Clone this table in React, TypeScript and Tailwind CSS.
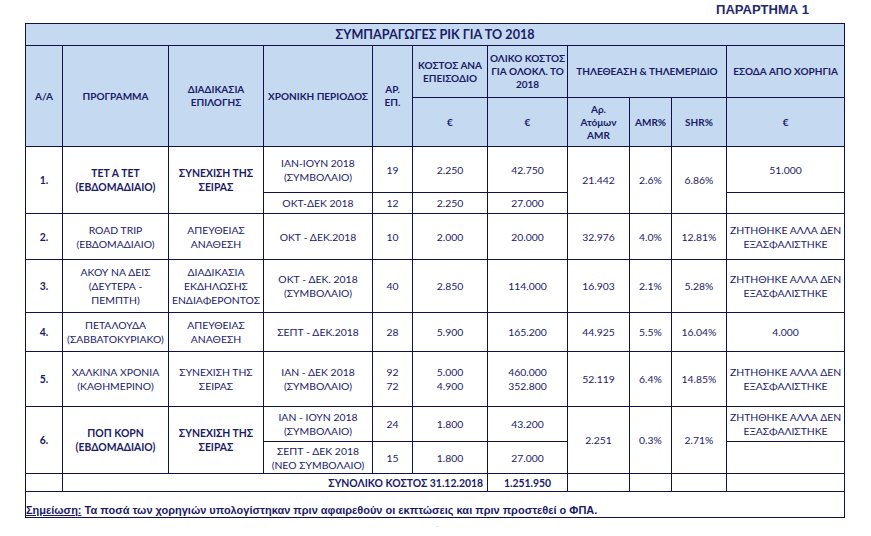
const cell = "border border-[#10104a] text-center align-middle px-0.5 whitespace-nowrap";
const head = `${cell} bg-[#c5d9f1] font-bold text-[10px] leading-[13px]`;
const body = `${cell} text-[10.4px] leading-[14px]`;

type Row = {
  no: string;
  title: string[];
  method: string[];
  bold?: boolean;
};

function Lines({ items }: { items: string[] }) {
  return (
    <>
      {items.map((t, i) => (
        <div key={i}>{t}</div>
      ))}
    </>
  );
}

export default function App() {
  const gap = "ΖΗΤΗΘΗΚΕ ΑΛΛΑ ΔΕΝ ΕΞΑΣΦΑΛΙΣΤΗΚΕ".split(" ΕΞ");
  const notSecured = [gap[0], "ΕΞ" + gap[1]];

  const r2: Row = { no: "2.", title: ["ROAD TRIP", "(ΕΒΔΟΜΑΔΙΑΙΟ)"], method: ["ΑΠΕΥΘΕΙΑΣ", "ΑΝΑΘΕΣΗ"] };

  return (
    <div className="w-[871px] h-[536px] bg-white text-[#1a1a66] font-['Lato','Noto_Sans',sans-serif] relative">
      <div className="h-[23px] flex justify-end pr-[62px] pt-[2px]">
        <span className="font-['Liberation_Sans',sans-serif] font-bold text-[13px] leading-[16px] text-[#1f2a6a]">
          ΠΑΡΑΡΤΗΜΑ 1
        </span>
      </div>
      <table className="ml-[25px] w-[819px] table-fixed border-collapse">
        <colgroup>
          <col className="w-[37px]" />
          <col className="w-[106px]" />
          <col className="w-[95px]" />
          <col className="w-[109px]" />
          <col className="w-[40px]" />
          <col className="w-[75px]" />
          <col className="w-[80px]" />
          <col className="w-[62px]" />
          <col className="w-[42px]" />
          <col className="w-[55px]" />
          <col className="w-[118px]" />
        </colgroup>
        <tbody>
          <tr className="h-[22px]">
            <td colSpan={11} className={`${head} text-[12.6px] leading-[16px]`}>
              ΣΥΜΠΑΡΑΓΩΓΕΣ ΡΙΚ ΓΙΑ ΤΟ 2018
            </td>
          </tr>
          <tr className="h-[52px]">
            <td rowSpan={2} className={head}>Α/Α</td>
            <td rowSpan={2} className={head}>ΠΡΟΓΡΑΜΜΑ</td>
            <td rowSpan={2} className={head}>
              <Lines items={["ΔΙΑΔΙΚΑΣΙΑ", "ΕΠΙΛΟΓΗΣ"]} />
            </td>
            <td rowSpan={2} className={head}>ΧΡΟΝΙΚΗ ΠΕΡΙΟΔΟΣ</td>
            <td rowSpan={2} className={head}>
              <Lines items={["ΑΡ.", "ΕΠ."]} />
            </td>
            <td className={head}>
              <Lines items={["ΚΟΣΤΟΣ ΑΝΑ", "ΕΠΕΙΣΟΔΙΟ"]} />
            </td>
            <td className={head}>
              <Lines items={["ΟΛΙΚΟ ΚΟΣΤΟΣ", "ΓΙΑ ΟΛΟΚΛ. ΤΟ", "2018"]} />
            </td>
            <td colSpan={3} className={head}>ΤΗΛΕΘΕΑΣΗ & ΤΗΛΕΜΕΡΙΔΙΟ</td>
            <td className={head}>ΕΣΟΔΑ ΑΠΟ ΧΟΡΗΓΙΑ</td>
          </tr>
          <tr className="h-[49px]">
            <td className={head}>€</td>
            <td className={head}>€</td>
            <td className={head}>
              <Lines items={["Αρ.", "Ατόμων", "AMR"]} />
            </td>
            <td className={head}>AMR%</td>
            <td className={head}>SHR%</td>
            <td className={head}>€</td>
          </tr>

          {/* 1 */}
          <tr className="h-[46px]">
            <td rowSpan={2} className={`${body} font-bold`}>1.</td>
            <td rowSpan={2} className={`${body} font-bold`}>
              <Lines items={["ΤΕΤ Α ΤΕΤ", "(ΕΒΔΟΜΑΔΙΑΙΟ)"]} />
            </td>
            <td rowSpan={2} className={`${body} font-bold`}>
              <Lines items={["ΣΥΝΕΧΙΣΗ ΤΗΣ", "ΣΕΙΡΑΣ"]} />
            </td>
            <td className={body}>
              <Lines items={["ΙΑΝ-ΙΟΥΝ 2018", "(ΣΥΜΒΟΛΑΙΟ)"]} />
            </td>
            <td className={body}>19</td>
            <td className={body}>2.250</td>
            <td className={body}>42.750</td>
            <td rowSpan={2} className={body}>21.442</td>
            <td rowSpan={2} className={body}>2.6%</td>
            <td rowSpan={2} className={body}>6.86%</td>
            <td className={body}>51.000</td>
          </tr>
          <tr className="h-[21px]">
            <td className={body}>ΟΚΤ-ΔΕΚ 2018</td>
            <td className={body}>12</td>
            <td className={body}>2.250</td>
            <td className={body}>27.000</td>
            <td className={body}></td>
          </tr>

          {/* 2 */}
          <tr className="h-[46px]">
            <td className={`${body} font-bold`}>{r2.no}</td>
            <td className={body}><Lines items={r2.title} /></td>
            <td className={body}><Lines items={r2.method} /></td>
            <td className={body}>ΟΚΤ - ΔΕΚ.2018</td>
            <td className={body}>10</td>
            <td className={body}>2.000</td>
            <td className={body}>20.000</td>
            <td className={body}>32.976</td>
            <td className={body}>4.0%</td>
            <td className={body}>12.81%</td>
            <td className={body}><Lines items={notSecured} /></td>
          </tr>

          {/* 3 */}
          <tr className="h-[53px]">
            <td className={`${body} font-bold`}>3.</td>
            <td className={body}>
              <Lines items={["ΑΚΟΥ ΝΑ ΔΕΙΣ", "(ΔΕΥΤΕΡΑ -", "ΠΕΜΠΤΗ)"]} />
            </td>
            <td className={body}>
              <Lines items={["ΔΙΑΔΙΚΑΣΙΑ", "ΕΚΔΗΛΩΣΗΣ", "ΕΝΔΙΑΦΕΡΟΝΤΟΣ"]} />
            </td>
            <td className={body}>
              <Lines items={["ΟΚΤ - ΔΕΚ. 2018", "(ΣΥΜΒΟΛΑΙΟ)"]} />
            </td>
            <td className={body}>40</td>
            <td className={body}>2.850</td>
            <td className={body}>114.000</td>
            <td className={body}>16.903</td>
            <td className={body}>2.1%</td>
            <td className={body}>5.28%</td>
            <td className={body}><Lines items={notSecured} /></td>
          </tr>

          {/* 4 */}
          <tr className="h-[39px]">
            <td className={`${body} font-bold`}>4.</td>
            <td className={body}>
              <Lines items={["ΠΕΤΑΛΟΥΔΑ", "(ΣΑΒΒΑΤΟΚΥΡΙΑΚΟ)"]} />
            </td>
            <td className={body}>
              <Lines items={["ΑΠΕΥΘΕΙΑΣ", "ΑΝΑΘΕΣΗ"]} />
            </td>
            <td className={body}>ΣΕΠΤ - ΔΕΚ.2018</td>
            <td className={body}>28</td>
            <td className={body}>5.900</td>
            <td className={body}>165.200</td>
            <td className={body}>44.925</td>
            <td className={body}>5.5%</td>
            <td className={body}>16.04%</td>
            <td className={body}>4.000</td>
          </tr>

          {/* 5 */}
          <tr className="h-[55px]">
            <td className={`${body} font-bold`}>5.</td>
            <td className={body}>
              <Lines items={["ΧΑΛΚΙΝΑ ΧΡΟΝΙΑ", "(ΚΑΘΗΜΕΡΙΝΟ)"]} />
            </td>
            <td className={body}>
              <Lines items={["ΣΥΝΕΧΙΣΗ ΤΗΣ", "ΣΕΙΡΑΣ"]} />
            </td>
            <td className={body}>
              <Lines items={["ΙΑΝ - ΔΕΚ 2018", "(ΣΥΜΒΟΛΑΙΟ)"]} />
            </td>
            <td className={body}><Lines items={["92", "72"]} /></td>
            <td className={body}><Lines items={["5.000", "4.900"]} /></td>
            <td className={body}><Lines items={["460.000", "352.800"]} /></td>
            <td className={body}>52.119</td>
            <td className={body}>6.4%</td>
            <td className={body}>14.85%</td>
            <td className={body}><Lines items={notSecured} /></td>
          </tr>

          {/* 6 */}
          <tr className="h-[35px]">
            <td rowSpan={2} className={`${body} font-bold`}>6.</td>
            <td rowSpan={2} className={`${body} font-bold`}>
              <Lines items={["ΠΟΠ ΚΟΡΝ", "(ΕΒΔΟΜΑΔΙΑΙΟ)"]} />
            </td>
            <td rowSpan={2} className={`${body} font-bold`}>
              <Lines items={["ΣΥΝΕΧΙΣΗ ΤΗΣ", "ΣΕΙΡΑΣ"]} />
            </td>
            <td className={body}>
              <Lines items={["ΙΑΝ - ΙΟΥΝ 2018", "(ΣΥΜΒΟΛΑΙΟ)"]} />
            </td>
            <td className={body}>24</td>
            <td className={body}>1.800</td>
            <td className={body}>43.200</td>
            <td rowSpan={2} className={body}>2.251</td>
            <td rowSpan={2} className={body}>0.3%</td>
            <td rowSpan={2} className={body}>2.71%</td>
            <td className={body}><Lines items={notSecured} /></td>
          </tr>
          <tr className="h-[32px]">
            <td className={body}>
              <Lines items={["ΣΕΠΤ - ΔΕΚ 2018", "(ΝΕΟ ΣΥΜΒΟΛΑΙΟ)"]} />
            </td>
            <td className={body}>15</td>
            <td className={body}>1.800</td>
            <td className={body}>27.000</td>
            <td className={body}></td>
          </tr>

          {/* total */}
          <tr className="h-[18px]">
            <td className={body}></td>
            <td colSpan={5} className={`${body} font-bold text-right pr-1`}>
              ΣΥΝΟΛΙΚΟ ΚΟΣΤΟΣ 31.12.2018
            </td>
            <td className={`${body} font-bold`}>1.251.950</td>
            <td className={body}></td>
            <td className={body}></td>
            <td className={body}></td>
            <td className={body}></td>
          </tr>

          {/* note */}
          <tr className="h-[26px]">
            <td
              colSpan={11}
              className="border border-[#10104a] align-bottom text-left font-['Liberation_Sans',sans-serif] font-bold text-[11px] leading-[13px] pb-0"
            >
              <span className="underline">Σημείωση:</span> Τα ποσά των χορηγιών υπολογίστηκαν πριν
              αφαιρεθούν οι εκπτώσεις και πριν προστεθεί ο ΦΠΑ.
            </td>
          </tr>
        </tbody>
      </table>
      <span className="absolute left-[436px] top-[524px] text-[6px] leading-[8px] text-gray-400">ˋ</span>
    </div>
  );
}
